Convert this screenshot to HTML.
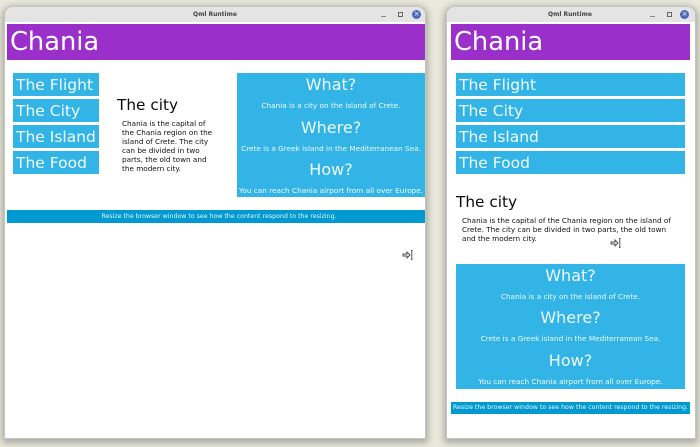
<!DOCTYPE html>
<html>
<head>
<meta charset="utf-8">
<style>
html,body{margin:0;padding:0;width:700px;height:447px;overflow:hidden;background:#e9eadb;font-family:"DejaVu Sans",sans-serif}
div{position:absolute;box-sizing:border-box;white-space:nowrap}
#r{position:absolute;left:0;top:0;width:700px;height:447px;filter:blur(.3px)}
.win{background:#fff;border-radius:8px 8px 0 0;box-shadow:0 0 0 1px #c4c4c0,0 2px 7px 3px rgba(90,90,90,.45)}
.bar{left:0;top:0;right:0;height:15px;background:#e4e4e4;border-radius:8px 8px 0 0}
.ttl{top:10px;font-size:6px;font-weight:bold;color:#444;line-height:10px}
.purple{background:#9a30c9;color:#fff;font-size:25.7px;line-height:37px;height:36px;padding-left:3px}
.btn{background:#33b4e6;color:#f2fbff;font-size:15.5px;line-height:24px;height:23px;padding-left:3px}
.blue{background:#33b4e6;color:#eefaff;text-align:center}
.h{left:0;right:0;font-size:16px;line-height:22px;text-align:center}
.s{left:0;right:0;font-size:7.3px;line-height:10px;text-align:center}
.h1{font-size:15.3px;line-height:20px;color:#0a0a0a}
.p{font-size:7.25px;line-height:9px;color:#111}
.foot{background:#0099d0;color:#e6f6fc;font-size:6.25px;line-height:13px;text-align:center}
.min{width:5px;height:1px;background:#888}
.max{width:5px;height:5px;border:1px solid #666}
.x{width:9px;height:9px;border-radius:50%;background:#4a68bb;color:#fff;font-size:7px;line-height:9px;text-align:center}
</style>
</head>
<body>
<div id="r">
<div class="win" style="left:5px;top:7px;width:420px;height:431px"></div>
<div class="win" style="left:447px;top:7px;width:248px;height:431px"></div>
<div class="bar" style="left:5px;top:7px;width:420px;right:auto"></div>
<div class="bar" style="left:447px;top:7px;width:248px;right:auto"></div>
<div class="ttl" style="left:193px">Qml Runtime</div>
<div class="ttl" style="left:548px">Qml Runtime</div>
<div class="min" style="left:381px;top:16px"></div>
<div class="max" style="left:398px;top:12px"></div>
<div class="x" style="left:412px;top:10px">×</div>
<div class="min" style="left:650px;top:16px"></div>
<div class="max" style="left:667px;top:12px"></div>
<div class="x" style="left:680px;top:10px">×</div>

<div class="purple" style="left:7px;top:24px;width:418px">Chania</div>
<div class="btn" style="left:13px;top:73px;width:86px">The Flight</div>
<div class="btn" style="left:13px;top:99px;width:86px">The City</div>
<div class="btn" style="left:13px;top:125px;width:86px">The Island</div>
<div class="btn" style="left:13px;top:151px;width:86px">The Food</div>
<div class="h1" style="left:117px;top:95px">The city</div>
<div class="p" style="left:122px;top:119px">Chania is the capital of<br>the Chania region on the<br>island of Crete. The city<br>can be divided in two<br>parts, the old town and<br>the modern city.</div>
<div class="blue" style="left:237px;top:73px;width:188px;height:124px">
<div class="h" style="top:1px">What?</div>
<div class="s" style="top:28px">Chania is a city on the island of Crete.</div>
<div class="h" style="top:44px">Where?</div>
<div class="s" style="top:71px">Crete is a Greek island in the Mediterranean Sea.</div>
<div class="h" style="top:86px">How?</div>
<div class="s" style="top:113px">You can reach Chania airport from all over Europe.</div>
</div>
<div class="foot" style="left:7px;top:210px;width:418px;height:13px;padding-left:6px">Resize the browser window to see how the content respond to the resizing.</div>
<svg style="position:absolute;left:402px;top:249px" width="12" height="12" viewBox="0 0 12 12" fill="none" stroke="#444" stroke-width=".9"><path d="M1 5h4V3l3 3-3 3V7H1z"/><path d="M9 1.500h1.500M9 10.500h1.500M9.800 1.500v9"/></svg>

<div class="purple" style="left:451px;top:24px;width:239px">Chania</div>
<div class="btn" style="left:456px;top:73px;width:229px">The Flight</div>
<div class="btn" style="left:456px;top:99px;width:229px">The City</div>
<div class="btn" style="left:456px;top:125px;width:229px">The Island</div>
<div class="btn" style="left:456px;top:151px;width:229px">The Food</div>
<div class="h1" style="left:456px;top:192px">The city</div>
<div class="p" style="left:462px;top:216px">Chania is the capital of the Chania region on the island of<br>Crete. The city can be divided in two parts, the old town<br>and the modern city.</div>
<svg style="position:absolute;left:610px;top:237px" width="12" height="12" viewBox="0 0 12 12" fill="none" stroke="#444" stroke-width=".9"><path d="M1 5h4V3l3 3-3 3V7H1z"/><path d="M9 1.500h1.500M9 10.500h1.500M9.800 1.500v9"/></svg>
<div class="blue" style="left:456px;top:264px;width:229px;height:125px">
<div class="h" style="top:1px">What?</div>
<div class="s" style="top:28px">Chania is a city on the island of Crete.</div>
<div class="h" style="top:43px">Where?</div>
<div class="s" style="top:70px">Crete is a Greek island in the Mediterranean Sea.</div>
<div class="h" style="top:86px">How?</div>
<div class="s" style="top:113px">You can reach Chania airport from all over Europe.</div>
</div>
<div class="foot" style="left:451px;top:402px;width:239px;height:12px;line-height:12px">Resize the browser window to see how the content respond to the resizing.</div>
</div>
</body>
</html>
